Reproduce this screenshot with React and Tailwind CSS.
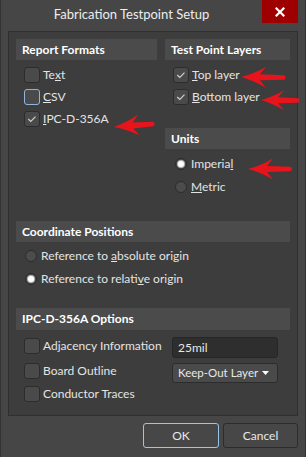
import React from "react";

function CheckBox({ checked = false, focus = false }) {
  return (
    <span
      className={
        focus
          ? "relative block w-[16px] h-[16px] shrink-0 rounded-[3px] border border-[#8cb6de] bg-[#4a4a4a]"
          : "relative block w-[16px] h-[16px] shrink-0 rounded-[3px] border border-[#2c2c2c] bg-[#4a4a4a]"
      }
    >
      {checked && (
        <svg width="14" height="14" viewBox="0 0 14 14" className="absolute left-0 top-0">
          <path d="M3.3 7 L5.8 9.5 L10.5 4.7" fill="none" stroke="#cfcfcf" strokeWidth="1.2" />
        </svg>
      )}
    </span>
  );
}

function Radio({ checked = false }) {
  return (
    <span className="relative flex items-center justify-center w-[12px] h-[12px] shrink-0 rounded-full border border-[#2c2c2c] bg-[#4c4c4c]">
      {checked && (
        <span className="block w-[6px] h-[6px] rounded-full bg-white shadow-[0_0_0_1px_#b5b5b5]" />
      )}
    </span>
  );
}

function Header({ children, h = "h-[21px]" }) {
  return (
    <div className={`${h} bg-[#4b4b4b] flex items-center pl-[6px] text-[12px] font-bold text-white`}>
      {children}
    </div>
  );
}

function arrowPath(tx, ty, ex, ey, hl = 25, hh = 10.5, sw = 3) {
  const dx = ex - tx;
  const dy = ey - ty;
  const L = Math.hypot(dx, dy);
  const ux = dx / L;
  const uy = dy / L;
  const nx = -uy;
  const ny = ux;
  const p = (a, b) => [tx + ux * a + nx * b, ty + uy * a + ny * b];
  const pts = {
    tip: p(0, 0),
    bt: p(hl, -hh),
    bb: p(hl, hh),
    ct: p(hl * 0.55, -hh * 0.35),
    cb: p(hl * 0.55, hh * 0.35),
    jt: p(hl - 6, -sw),
    jb: p(hl - 6, sw),
    et: p(L, -sw * 0.75),
    eb: p(L, sw * 0.75),
  };
  const f = (q) => `${q[0].toFixed(1)} ${q[1].toFixed(1)}`;
  return `M ${f(pts.tip)} Q ${f(pts.ct)} ${f(pts.bt)} L ${f(pts.jt)} L ${f(pts.et)} A ${(sw * 0.75).toFixed(1)} ${(sw * 0.75).toFixed(1)} 0 0 1 ${f(pts.eb)} L ${f(pts.jb)} L ${f(pts.bb)} Q ${f(pts.cb)} ${f(pts.tip)} Z`;
}

export default function App() {
  return (
    <div className="relative w-[306px] h-[457px] bg-[#464646] border-x border-[#333333] font-['Lato',sans-serif] text-[12px] text-[#e4e4e4] overflow-hidden">
      {/* Title bar */}
      <div className="flex h-[31px]">
        <div className="flex-1 flex justify-center items-start pt-[5px] text-[13px] text-[#ededed]">
          Fabrication Testpoint Setup
        </div>
        <div className="w-[36px] h-[23px] mr-[7px] bg-[#9e0000] flex items-center justify-center">
          <svg width="10" height="10" viewBox="0 0 10 10">
            <path d="M1.5 1.5 L8.5 8.5 M8.5 1.5 L1.5 8.5" stroke="white" strokeWidth="2.2" strokeLinecap="square" />
          </svg>
        </div>
      </div>

      {/* Main panel */}
      <div className="mx-[7px] h-[385px] border border-[#2f2f2f] bg-[#3d3d3d] px-[7px] pt-[7px]">
        <div className="flex gap-[8px]">
          {/* Report formats */}
          <div className="w-[141px]">
            <Header>Report Formats</Header>
            <div className="mt-[4px]">
              <div className="h-[22px] flex items-center pl-[8px] gap-[3px]">
                <CheckBox />
                <span>Te<u>x</u>t</span>
              </div>
              <div className="h-[22px] flex items-center pl-[8px] gap-[3px]">
                <CheckBox focus />
                <span><u>C</u>SV</span>
              </div>
              <div className="h-[22px] flex items-center pl-[8px] gap-[3px]">
                <CheckBox checked />
                <span><u>I</u>PC-D-356A</span>
              </div>
            </div>
          </div>
          {/* Test point layers + Units */}
          <div className="w-[125px]">
            <Header>Test Point Layers</Header>
            <div className="mt-[4px]">
              <div className="h-[22px] flex items-center pl-[8px] gap-[3px]">
                <CheckBox checked />
                <span><u>T</u>op layer</span>
              </div>
              <div className="h-[22px] flex items-center pl-[8px] gap-[3px]">
                <CheckBox checked />
                <span><u>B</u>ottom layer</span>
              </div>
            </div>
            <div className="mt-[20px]">
              <Header>Units</Header>
              <div className="mt-[3px]">
                <div className="h-[23px] flex items-center pl-[10px] gap-[4px]">
                  <Radio checked />
                  <span>Imperia<u>l</u></span>
                </div>
                <div className="h-[23px] flex items-center pl-[10px] gap-[4px]">
                  <Radio />
                  <span><u>M</u>etric</span>
                </div>
              </div>
            </div>
          </div>
        </div>

        {/* Coordinate positions */}
        <div className="mt-[23px]">
          <Header>Coordinate Positions</Header>
          <div className="mt-[3px]">
            <div className="h-[22px] flex items-center pl-[9px] gap-[4px]">
              <Radio />
              <span>Reference to <u>a</u>bsolute origin</span>
            </div>
            <div className="h-[23px] flex items-center pl-[9px] gap-[4px]">
              <Radio checked />
              <span>Reference to relati<u>v</u>e origin</span>
            </div>
          </div>
        </div>

        {/* IPC options */}
        <div className="mt-[18px]">
          <Header h="h-[22px]">IPC-D-356A Options</Header>
          <div className="flex">
            <div className="flex-1 pl-[8px] pt-[4px]">
              <div className="h-[23px] flex items-center gap-[3px]">
                <CheckBox />
                <span>Adjacency Information</span>
              </div>
              <div className="h-[23px] mt-[2px] flex items-center gap-[3px]">
                <CheckBox />
                <span>Board Outline</span>
              </div>
              <div className="h-[23px] flex items-center gap-[3px]">
                <CheckBox />
                <span>Conductor Traces</span>
              </div>
            </div>
            <div className="w-[106px] mr-[12px] pt-[7px]">
              <div className="h-[21px] rounded-[3px] border border-[#262626] bg-[#2e2e2e] flex items-center pl-[5px] text-[#e8e8e8]">
                25mil
              </div>
              <div className="h-[20px] mt-[5px] rounded-[3px] border border-[#2c2c2c] bg-[#4a4a4a] flex items-center pl-[5px] pr-[8px] justify-between text-[#e8e8e8] whitespace-nowrap">
                <span className="text-[11.5px]">Keep-Out Layer</span>
                <svg width="7" height="4" viewBox="0 0 7 4" className="shrink-0">
                  <path d="M0 0 L7 0 L3.5 4 Z" fill="white" />
                </svg>
              </div>
            </div>
          </div>
        </div>
      </div>

      {/* Buttons */}
      <div className="flex justify-end gap-[4px] pr-[7px] mt-[7px]">
        <button className="w-[76px] h-[25px] rounded-[3px] border border-[#9cc4e6] bg-[#474747] text-[#e8e8e8] text-[12px]">
          OK
        </button>
        <button className="w-[75px] h-[25px] rounded-[3px] border border-[#2c2c2c] bg-[#474747] text-[#e8e8e8] text-[12px]">
          Cancel
        </button>
      </div>

      {/* Red annotation arrows */}
      <svg className="absolute left-0 top-0 pointer-events-none" width="306" height="457" viewBox="0 0 306 457">
        <path d={arrowPath(113, 127, 152, 124)} fill="#e8141c" />
        <path d={arrowPath(240, 77, 283, 77.5)} fill="#e8141c" />
        <path d={arrowPath(260, 100, 297, 100.5, 23, 10)} fill="#e8141c" />
        <path d={arrowPath(247, 169, 289, 169)} fill="#e8141c" />
      </svg>
    </div>
  );
}
